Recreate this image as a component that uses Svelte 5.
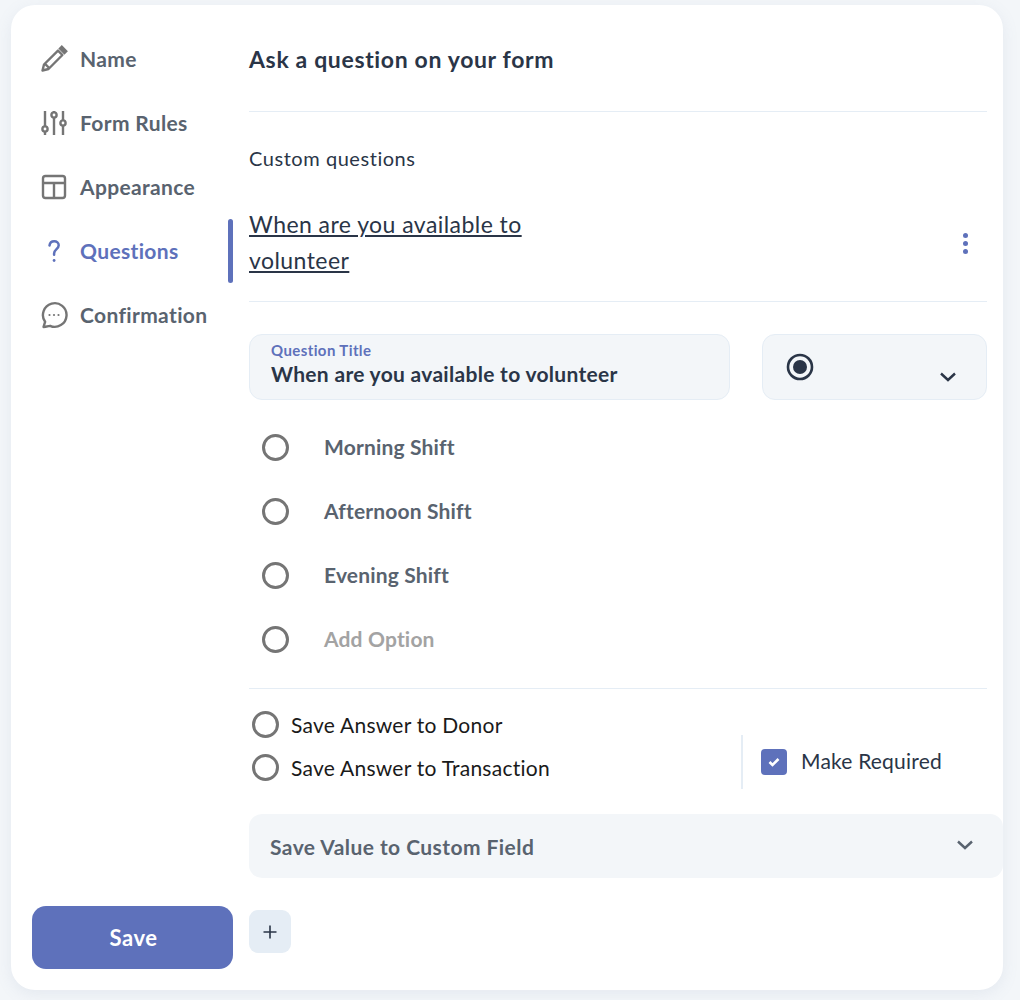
<script>
  const navItems = [
    { label: 'Name', icon: 'pencil' },
    { label: 'Form Rules', icon: 'sliders' },
    { label: 'Appearance', icon: 'layout' },
    { label: 'Questions', icon: 'help', active: true },
    { label: 'Confirmation', icon: 'chat' }
  ]
  const options = ['Morning Shift', 'Afternoon Shift', 'Evening Shift']
  const saveTargets = ['Save Answer to Donor', 'Save Answer to Transaction']
</script>

<div class="page">
  <div class="card">
    <aside class="sidebar">
      <nav class="nav">
        {#each navItems as item}
          <div class="nav-item" class:active={item.active}>
            <svg class="nav-icon" viewBox="0 0 28 28" fill="none" stroke="currentColor" stroke-width="2.4">
              {#if item.icon === 'pencil'}
                <path d="M2.500 25.500l1.500-6L18 5.600l4.400 4.400L8.500 24z" stroke-linejoin="round" />
                <path d="M4.800 18.600l4.400 4.400" />
                <path d="M20 3.600l1.800-1.800 4.400 4.400-1.800 1.800z" fill="currentColor" />
              {:else if item.icon === 'sliders'}
                <path d="M5 2v15M5 23v3M14 2v1M14 9v17M23 2v9M23 17v9" />
                <circle cx="5" cy="20" r="2.600" />
                <circle cx="14" cy="6" r="2.600" />
                <circle cx="23" cy="14" r="2.600" />
              {:else if item.icon === 'layout'}
                <rect x="3" y="3" width="22" height="22" rx="2.500" />
                <path d="M3 10h22M14 10v15" />
              {:else if item.icon === 'help'}
                <path d="M9.500 8.500c.4-2.700 2.400-4.200 4.700-4.200 2.600 0 4.500 1.700 4.500 4 0 3.800-4.600 4-4.600 8.300v1.200" stroke-width="2.500" stroke-linecap="round" />
                <circle cx="14.100" cy="23.500" r="1.400" fill="currentColor" stroke="none" />
              {:else}
                <path d="M3.500 26l1.600-5.200A11.800 11.800 0 1 1 10 24.800c-1.900.4-4.500 1.100-6.500 1.200z" stroke-linejoin="round" />
                <circle cx="9.500" cy="14" r="1.100" fill="currentColor" stroke="none" />
                <circle cx="14" cy="14" r="1.100" fill="currentColor" stroke="none" />
                <circle cx="18.500" cy="14" r="1.100" fill="currentColor" stroke="none" />
              {/if}
            </svg>
            <span>{item.label}</span>
            {#if item.active}<div class="active-bar"></div>{/if}
          </div>
        {/each}
      </nav>
      <button class="save">Save</button>
    </aside>

    <main class="content">
      <h1 class="heading">Ask a question on your form</h1>
      <div class="section-label">Custom questions</div>
      <div class="question-row">
        <a class="question-link" href="#q">When are you available to volunteer</a>
        <div class="dots"><i></i><i></i><i></i></div>
      </div>

      <div class="fields">
        <div class="title-field">
          <div class="field-label">Question Title</div>
          <div class="field-value">When are you available to volunteer</div>
        </div>
        <div class="type-field">
          <svg class="type-radio" viewBox="0 0 28 28">
            <circle cx="14" cy="14" r="12" fill="none" stroke="#2a3547" stroke-width="2.600" />
            <circle cx="14" cy="14" r="7" fill="#2a3547" />
          </svg>
          <svg class="type-chevron" viewBox="0 0 16 10" fill="none" stroke="#2a3547" stroke-width="2.400">
            <path d="M1 1.500l7 6.500 7-6.500" />
          </svg>
        </div>
      </div>

      <div class="options">
        {#each options as option}
          <div class="option"><span class="radio"></span><span>{option}</span></div>
        {/each}
        <div class="option add"><span class="radio"></span><span>Add Option</span></div>
      </div>

      <div class="save-row">
        <div class="targets">
          {#each saveTargets as target}
            <div class="target"><span class="radio"></span><span>{target}</span></div>
          {/each}
        </div>
        <div class="required">
          <span class="checkbox">
            <svg viewBox="0 0 12 10" fill="none" stroke="#fff" stroke-width="2.600"><path d="M1.500 5l3 3 6-6" /></svg>
          </span>
          <span class="required-label">Make Required</span>
        </div>
      </div>

      <div class="custom-field">
        <span>Save Value to Custom Field</span>
        <svg viewBox="0 0 16 10" fill="none" stroke="#59636f" stroke-width="2.400">
          <path d="M1 1.500l7 6.500 7-6.500" />
        </svg>
      </div>

      <button class="add-btn" aria-label="Add">
        <svg viewBox="0 0 14 14" fill="none" stroke="#2a3547" stroke-width="1.600"><path d="M7 .5v13M.5 7h13" /></svg>
      </button>
    </main>
  </div>
</div>

<style>
  :global(body) {
    margin: 0;
    background: #f3f6f9;
  }
  .page {
    width: 1020px;
    height: 1000px;
    padding: 5px 17px 10px 11px;
    box-sizing: border-box;
    font-family: Lato, "Open Sans", sans-serif;
    color: #2a3547;
  }
  .card {
    display: flex;
    height: 985px;
    background: #fff;
    border-radius: 24px;
    box-shadow: 0 4px 16px rgba(120, 140, 170, 0.12);
  }
  .sidebar {
    width: 238px;
    flex: none;
    display: flex;
    flex-direction: column;
    padding: 22px 0 21px;
    box-sizing: border-box;
  }
  .nav-item {
    position: relative;
    display: flex;
    align-items: center;
    height: 64px;
    padding-left: 29px;
    font-size: 21px;
    font-weight: 700;
    color: #59636f;
    letter-spacing: 0.35px;
  }
  .nav-item span {
    padding-bottom: 2px;
  }
  .nav-item.active {
    color: #5e71bb;
  }
  .nav-icon {
    width: 28px;
    height: 28px;
    margin-right: 12px;
    color: #757575;
    flex: none;
  }
  .nav-item.active .nav-icon {
    color: #5e71bb;
  }
  .active-bar {
    position: absolute;
    right: 16px;
    top: 0;
    width: 5px;
    height: 64px;
    border-radius: 3px;
    background: #5e71bb;
  }
  .save {
    margin: auto 0 0 21px;
    width: 201px;
    height: 63px;
    padding: 0 0 0 2px;
    border: none;
    border-radius: 14px;
    background: #5e71bb;
    color: #fff;
    font: 700 22px Lato, sans-serif;
    letter-spacing: 0.5px;
  }
  .content {
    flex: 1;
    min-width: 0;
  }
  .heading {
    margin: 0;
    height: 107px;
    padding-top: 37px;
    box-sizing: border-box;
    border-bottom: 1px solid #e5edf5;
    font-size: 23px;
    line-height: 34px;
    font-weight: 700;
    letter-spacing: 0.65px;
    width: 738px;
  }
  .section-label {
    margin-top: 32px;
    font-size: 20px;
    line-height: 28px;
    letter-spacing: 0.55px;
  }
  .question-row {
    width: 738px;
    height: 120px;
    margin-top: 10px;
    padding-top: 24px;
    box-sizing: border-box;
    display: flex;
    justify-content: space-between;
    border-bottom: 1px solid #e5edf5;
  }
  .question-link {
    width: 300px;
    font-size: 23px;
    line-height: 36px;
    letter-spacing: 0.44px;
    color: #2a3547;
  }
  .dots {
    display: flex;
    flex-direction: column;
    gap: 3px;
    margin: 27px 19px 0 0;
  }
  .dots i {
    width: 5px;
    height: 5px;
    border-radius: 50%;
    background: #5e71bb;
  }
  .fields {
    display: flex;
    gap: 32px;
    width: 738px;
    margin-top: 32px;
  }
  .title-field {
    width: 481px;
    height: 66px;
    box-sizing: border-box;
    padding: 6px 21px;
    background: #f3f6f9;
    border: 1px solid #e5edf5;
    border-radius: 13px;
  }
  .field-label {
    font-size: 15px;
    line-height: 18px;
    font-weight: 700;
    letter-spacing: 0.4px;
    color: #5e71bb;
  }
  .field-value {
    margin-top: 1px;
    font-size: 21px;
    line-height: 28px;
    font-weight: 700;
    letter-spacing: 0.3px;
  }
  .type-field {
    width: 225px;
    height: 66px;
    box-sizing: border-box;
    position: relative;
    background: #f3f6f9;
    border: 1px solid #e5edf5;
    border-radius: 13px;
  }
  .type-radio {
    position: absolute;
    left: 23px;
    top: 18px;
    width: 28px;
    height: 28px;
  }
  .type-chevron {
    position: absolute;
    left: 177px;
    top: 37px;
    width: 16px;
    height: 10px;
  }
  .options {
    width: 738px;
    padding: 14px 0 18px;
    border-bottom: 1px solid #e5edf5;
  }
  .option {
    display: flex;
    align-items: center;
    height: 64px;
    padding-left: 13px;
    font-size: 21px;
    font-weight: 700;
    letter-spacing: 0.17px;
    color: #59636f;
  }
  .option .radio {
    margin: 2px 35px 0 0;
  }
  .option.add {
    color: #a3a3a3;
  }
  .radio {
    width: 27px;
    height: 27px;
    box-sizing: border-box;
    border: 3px solid #757575;
    border-radius: 50%;
    flex: none;
  }
  .save-row {
    display: flex;
    width: 738px;
    height: 125px;
    justify-content: space-between;
  }
  .targets {
    padding-top: 14px;
  }
  .target {
    display: flex;
    align-items: center;
    height: 43px;
    padding-left: 3px;
    gap: 12px;
    font-size: 21px;
    letter-spacing: 0.25px;
    color: #1a1a1a;
  }
  .required {
    align-self: flex-start;
    margin-top: 46px;
    width: 246px;
    height: 54px;
    box-sizing: border-box;
    border-left: 2px solid #e5edf5;
    padding-left: 18px;
    display: flex;
    align-items: center;
    gap: 14px;
    font-size: 21px;
    letter-spacing: 0.2px;
  }
  .required-label {
    padding-bottom: 4px;
  }
  .checkbox {
    width: 26px;
    height: 26px;
    border-radius: 4px;
    background: #5e71bb;
    display: flex;
    align-items: center;
    justify-content: center;
  }
  .checkbox svg {
    width: 12px;
    height: 10px;
  }
  .custom-field {
    width: 754px;
    height: 64px;
    box-sizing: border-box;
    padding: 1px 30px 0 21px;
    background: #f3f6f9;
    border-radius: 13px;
    display: flex;
    align-items: center;
    justify-content: space-between;
    font-size: 21px;
    font-weight: 700;
    letter-spacing: 0.44px;
    color: #59636f;
  }
  .custom-field svg {
    width: 16px;
    height: 10px;
    margin-top: -3px;
  }
  .add-btn {
    display: flex;
    align-items: center;
    justify-content: center;
    margin-top: 32px;
    width: 42px;
    height: 43px;
    border: none;
    padding: 0;
    border-radius: 9px;
    background: #e5edf5;
  }
  .add-btn svg {
    width: 14px;
    height: 14px;
  }
</style>
